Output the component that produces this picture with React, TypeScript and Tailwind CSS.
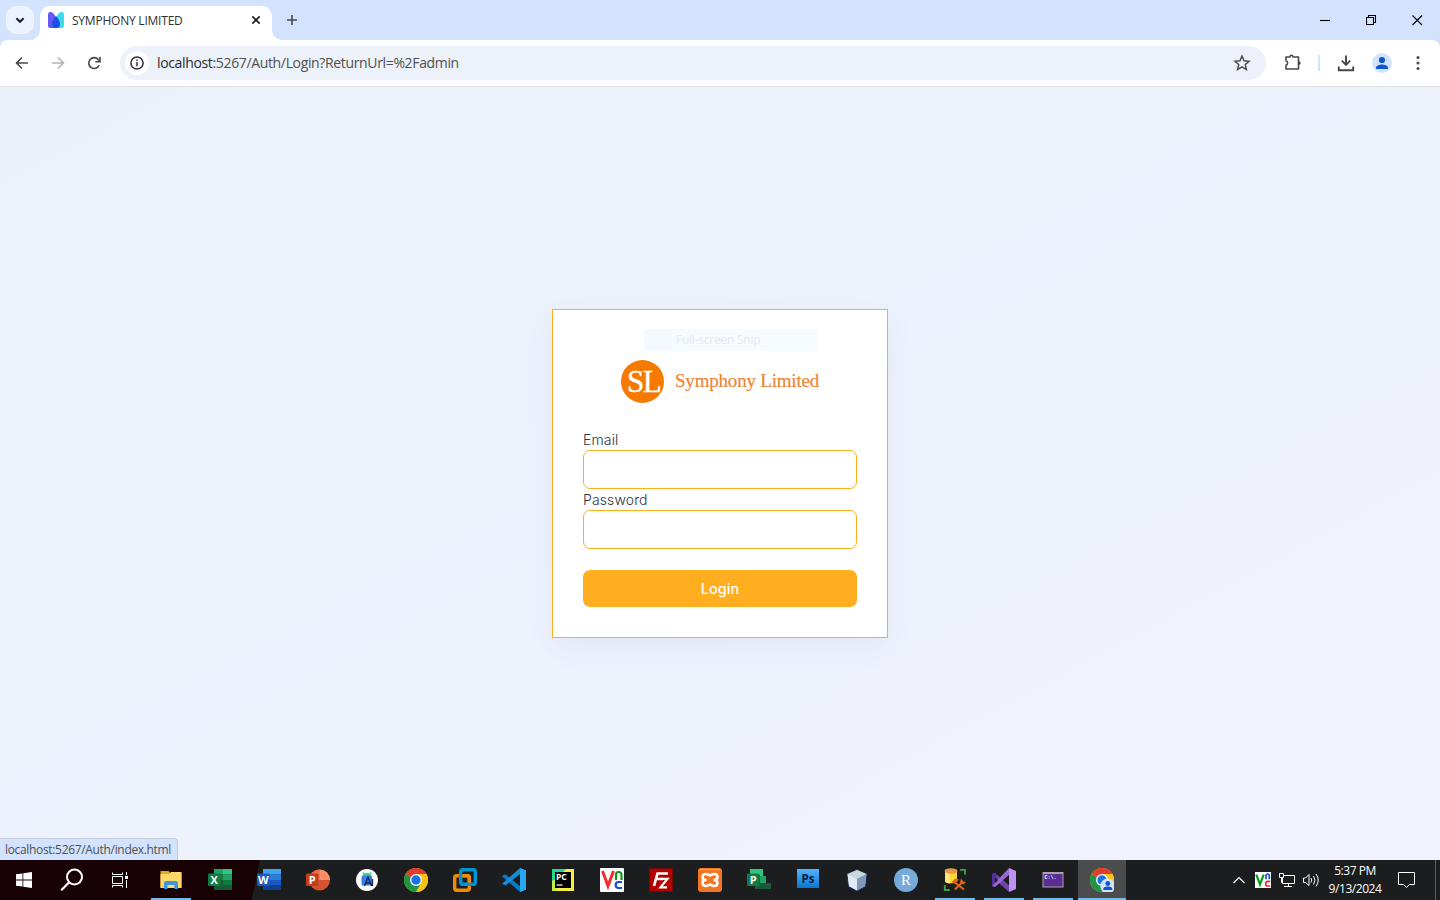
import React from "react";

const UI_FONT = "font-['Open_Sans','Noto_Sans',sans-serif]";

function Svg({ size = 24, box, className = "", children }: { size?: number; box?: string; className?: string; children: React.ReactNode }) {
  return (
    <svg width={size} height={size} viewBox={box ?? "0 0 24 24"} fill="none" className={`block shrink-0 ${className}`}>
      {children}
    </svg>
  );
}

function TabStrip() {
  return (
    <header className="flex h-10 items-start bg-[#d3e3fd]">
      <button className="ml-1.5 mt-1.5 flex h-7 w-7 shrink-0 items-center justify-center rounded-[10px] bg-[#edf3fe]">
        <Svg size={28} box="0 0 28 28"><path d="m10.400 12.200 3.600 3.600 3.600-3.600" stroke="#1f1f1f" strokeWidth="2" /></Svg>
      </button>
      <div className="flex h-10 w-[6px] items-end">
        <svg width="6" height="10" viewBox="0 0 6 10"><path d="M6 0v10H-4A10 10 0 0 0 6 0" fill="#fff" /></svg>
      </div>
      <div className="mt-1.5 flex h-[34px] w-[232px] items-center rounded-t-[10px] bg-white pb-1.5 pl-2">
        <Svg size={16} box="0 0 16 16">
          <path d="M0 3C0-.5 3-.7 5 1l3 4v11H2q-2 0-2-2z" fill="#6558f5" />
          <path d="M16 3c0-3.500-3-3.700-5-2L8 5v11h6q2 0 2-2z" fill="#3ddcec" />
          <path d="M8 4c2 2 4 5 4 8 0 2-1 4-2.500 4h-3C5 16 4 14 4 12c0-3 2-6 4-8" fill="#1b4fe8" />
        </Svg>
        <span className="ml-2 w-[176px] whitespace-nowrap pt-px text-[12px] leading-4 tracking-[-0.22px] text-[#303030]">SYMPHONY LIMITED</span>
        <Svg size={16} box="0 0 16 16"><path d="m4.300 4.300 7.400 7.400m0-7.400-7.400 7.400" stroke="#1f1f1f" strokeWidth="1.700" /></Svg>
      </div>
      <div className="flex h-10 w-[10px] items-end">
        <svg width="10" height="10" viewBox="0 0 10 10"><path d="M0 0v10h10A10 10 0 0 1 0 0" fill="#fff" /></svg>
      </div>
      <div className="flex h-10 w-5 items-center justify-center">
        <Svg size={12} box="0 0 12 12"><path d="M6 1v10M1 6h10" stroke="#474747" strokeWidth="1.600" /></Svg>
      </div>
      <div className="ml-auto flex h-10 items-center">
        {["M0 5.500h10", "M.500 2.500h7v7h-7zM2.500 2.500V.500h7v7H8", "m.500.500 9.500 9.500m0-9.500-9.500 9.500"].map((d) => (
          <div key={d} className="flex w-[46px] justify-center">
            <Svg size={11} box="0 0 11 11"><path d={d} stroke="#000" strokeWidth="1.100" /></Svg>
          </div>
        ))}
      </div>
    </header>
  );
}

function Toolbar() {
  return (
    <div className="bg-[#d3e3fd]">
      <div className="flex h-[47px] items-center rounded-t-[8px] border-b border-[#dfe1e5] bg-white pl-[14px]">
        <Svg size={16} box="0 0 16 16"><path d="M14 8H2.800M8 2.500 2.500 8 8 13.500" stroke="#474747" strokeWidth="1.600" /></Svg>
        <Svg size={16} box="0 0 16 16" className="ml-5"><path d="M2 8h11.200M8 2.500 13.500 8 8 13.500" stroke="#b4b4b4" strokeWidth="1.600" /></Svg>
        <Svg size={16} box="0 0 16 16" className="ml-5">
          <path d="M13.100 10.200A5.400 5.400 0 1 1 12.300 4.600L13.800 6" stroke="#474747" strokeWidth="1.600" />
          <path d="M14 2v4.700H9.300" stroke="#474747" strokeWidth="1.600" />
        </Svg>
        <div className="ml-[18px] flex h-[34px] w-[1146px] items-center rounded-full bg-[#ecf1fa] pl-[5px]">
          <div className="flex h-6 w-6 items-center justify-center rounded-full bg-white">
            <Svg size={16} box="0 0 16 16">
              <circle cx="8" cy="8" r="6.100" stroke="#303236" strokeWidth="1.500" />
              <path d="M8 7.100v4.100M8 4.600v1.500" stroke="#303236" strokeWidth="1.500" />
            </Svg>
          </div>
          <span className="ml-2 flex-1 whitespace-nowrap text-[14px] leading-5 tracking-[-0.350px] text-[#505050]">
            <span className="text-[#2a2a2a]">localhost</span>:5267/Auth/Login?ReturnUrl=%2Fadmin
          </span>
          <Svg size={18} box="0 0 24 24" className="mr-[15px]">
            <path d="m12 2.800 2.700 6.200 6.800.6-5.100 4.500 1.500 6.600L12 17.200l-5.900 3.500 1.500-6.600-5.100-4.500 6.800-.6z" stroke="#474747" strokeWidth="1.900" />
          </Svg>
        </div>
        <Svg size={20} box="0 0 20 20" className="ml-[17px]">
          <path d="M3 4h4V3.700a1.400 1.400 0 0 1 2.800 0V4h5.700v12H3v-3.800a2.300 2.300 0 0 0 0-4.400z" stroke="#474747" strokeWidth="1.600" strokeLinejoin="round" />
          <path d="M15.500 8.200c2.800-.4 2.800 4 0 3.600" fill="#474747" />
        </Svg>
        <div className="ml-[15px] h-4 w-0.5 bg-[#d3e3fd]" />
        <Svg size={18} box="0 0 18 18" className="ml-[17px]">
          <path d="M9 1.500v9M4.800 6.700 9 10.900l4.200-4.200M1.800 12.500v3.700h14.400v-3.700" stroke="#474747" strokeWidth="1.900" />
        </Svg>
        <div className="ml-[17px] flex h-5 w-5 items-center justify-center rounded-full bg-[#d3e3fd]">
          <Svg size={20} box="0 0 20 20"><circle cx="10" cy="7" r="3.100" fill="#0b57d0" /><path d="M4 16v-1.500c0-2 4-3 6-3s6 1 6 3V16z" fill="#0b57d0" /></Svg>
        </div>
        <Svg size={18} box="0 0 18 18" className="ml-[17px]">
          <g fill="#474747"><circle cx="9" cy="3.500" r="1.500" /><circle cx="9" cy="9" r="1.500" /><circle cx="9" cy="14.500" r="1.500" /></g>
        </Svg>
      </div>
    </div>
  );
}

function LoginCard() {
  return (
    <form className="relative flex h-[329px] w-[336px] flex-col border border-[#ffae1f] bg-white px-[30px] font-['Inter',sans-serif] text-[14px] text-[#2a3547] shadow-[0_10px_28px_rgba(60,60,100,0.06)]">
      <div className="mt-[49px] flex h-[44px] items-center pl-[38px] font-['Liberation_Serif',serif]">
        <div className="flex h-[43px] w-[43px] items-center justify-center rounded-full bg-[#f67a00] text-[31px] leading-none tracking-[-1.700px] text-white [-webkit-text-stroke:0.400px_#fff]">
          <span className="pl-0.5">SL</span>
        </div>
        <span className="ml-[11px] whitespace-nowrap text-[19px] leading-6 tracking-[-0.200px] text-[#ee8434] [-webkit-text-stroke:0.200px_#ee8434]">Symphony Limited</span>
      </div>
      <label className="mt-[26px] h-[21px] font-light leading-[21px] tracking-[0.130px]">Email</label>
      <input className="h-[39px] w-full rounded-[7px] border border-[#ffae1f] bg-white px-4" />
      <label className="h-[21px] font-light leading-[21px] tracking-[0.130px]">Password</label>
      <input type="password" className="h-[39px] w-full rounded-[7px] border border-[#ffae1f] bg-white px-4" />
      <button type="button" className="mt-[21px] h-[37px] w-full rounded-[7px] bg-[#ffae1f] text-[14.500px] font-medium text-white">Login</button>
      <div className={`absolute left-[91px] top-[19px] flex h-[22px] w-[173px] items-center bg-[#f6fbff] ${UI_FONT} text-[12px] leading-none text-[#e8eaed]`}>
        <span className="h-full w-7 bg-[#f4f9ff]" />
        <span className="whitespace-nowrap pl-1 tracking-[-0.240px]">Full-screen Snip</span>
      </div>
    </form>
  );
}

function OfficeTile({ letter, color }: { letter: string; color: string }) {
  return (
    <g>
      <rect x="0" y="5.500" width="12.500" height="12.500" rx="1" fill={color} />
      <text x="6.250" y="15.800" textAnchor="middle" fontSize="11" fontWeight="700" fontFamily="Open Sans, sans-serif" fill="#fff">{letter}</text>
    </g>
  );
}

function ChromeMark() {
  return (
    <g>
      <circle cx="12" cy="12" r="12" fill="#fbc116" />
      <path d="M12 12 1.600 6A12 12 0 0 1 22.400 6H12z" fill="#e33b2e" />
      <path d="M1.600 6A12 12 0 0 0 12 24l5.200-9L12 12z" fill="#229342" />
      <path d="M12 6h10.400A12 12 0 0 1 12 24l5.200-9z" fill="#fbc116" />
      <circle cx="12" cy="12" r="6" fill="#fff" />
      <circle cx="12" cy="12" r="4.700" fill="#1a73e8" />
    </g>
  );
}

const apps: { name: string; running?: boolean; active?: boolean; art: React.ReactNode }[] = [
  {
    name: "Files", running: true, art: (
      <g>
        <path d="M1.500 3h8l2 2h11v15h-21z" fill="#e8a317" />
        <path d="M1.500 6h9l1.500-2h10.500v16h-21z" fill="#ffd869" />
        <path d="M5 21v-6q0-2 2-2h10q2 0 2 2v6h-3.500v-4h-7v4z" fill="#3a96dd" />
      </g>
    ),
  },
  {
    name: "Excel", art: (
      <g>
        <rect x="6" y="1" width="18" height="21" rx="1" fill="#185c37" />
        <path d="M6 1h9v5.500H6z" fill="#21a366" /><path d="M15 1h9v5.500h-9z" fill="#33c481" />
        <path d="M15 6.500h9V12h-9z" fill="#21a366" /><path d="M6 6.500h9V12H6z" fill="#107c41" /><path d="M15 12h9v5h-9z" fill="#107c41" />
        <OfficeTile letter="X" color="#107c41" />
      </g>
    ),
  },
  {
    name: "Word", art: (
      <g>
        <rect x="6" y="1" width="18" height="21" rx="1" fill="#103f91" />
        <path d="M6 1h18v5.500H6z" fill="#41a5ee" /><path d="M6 6.500h18V12H6z" fill="#2b7cd3" /><path d="M6 12h18v5H6z" fill="#185abd" />
        <OfficeTile letter="W" color="#185abd" />
      </g>
    ),
  },
  {
    name: "PowerPoint", art: (
      <g>
        <circle cx="13.500" cy="12" r="10.500" fill="#d35230" />
        <path d="M13.500 12V1.500A10.500 10.500 0 0 0 3 12z" fill="#ed6c47" /><path d="M13.500 12V1.500A10.500 10.500 0 0 1 24 12z" fill="#ff8f6b" />
        <OfficeTile letter="P" color="#c43e1c" />
      </g>
    ),
  },
  {
    name: "Android Studio", art: (
      <g>
        <circle cx="12" cy="12" r="11" fill="#fff" />
        <path d="M7 8.500a5 3.500 0 0 1 10 0z" fill="#34c879" /><path d="m8 4 1 2m7-2-1 2" stroke="#34c879" />
        <rect x="6.500" y="8" width="10.500" height="9.500" rx="1" fill="#377df0" />
        <path d="m9.500 18 3.500-9 3.500 9m-5.800-3H15m2.500-4v7" stroke="#10223e" strokeWidth="1.300" />
      </g>
    ),
  },
  { name: "Chrome", art: <ChromeMark /> },
  {
    name: "VMware", art: (
      <g strokeWidth="3.400">
        <rect x="1.700" y="7.700" width="14.600" height="14.600" rx="2" stroke="#f38b00" />
        <rect x="7.700" y="1.700" width="14.600" height="14.600" rx="2" stroke="#0095d3" />
        <path d="M9.400 7.700h4.900q2 0 2 2v4.900" stroke="#f38b00" />
      </g>
    ),
  },
  {
    name: "VS Code", art: (
      <g>
        <path d="m18 0 6 2.500v19L18 24 0 8.200l2-1.700 2 .3L18 18z" fill="#0879c2" />
        <path d="M18 0v6L3.500 17.500 0 15.800z" fill="#168cd7" />
        <path d="m18 0 6 2.500v19L18 24z" fill="#2aa7f0" />
      </g>
    ),
  },
  {
    name: "PyCharm", art: (
      <g>
        <path d="M1 1h22v22H1z" fill="#f5ef48" /><path d="M1 23V1h14L8 8z" fill="#25d792" /><path d="M1 23V13l5-2v12z" fill="#c9eb52" />
        <path d="M4 4h16v16H4z" fill="#000" />
        <text x="5" y="12.300" fontSize="8.500" fontWeight="700" fontFamily="Open Sans, sans-serif" fill="#fff">PC</text>
        <path d="M5.500 17h6" stroke="#fff" strokeWidth="1.200" />
      </g>
    ),
  },
  {
    name: "VNC", art: (
      <g>
        <rect width="24" height="24" rx="1" fill="#fff" />
        <path d="m2.500 3 5.500 15L13.500 3" stroke="#f02c2c" strokeWidth="3" />
        <path d="M16 12V6.500q0-2.500 2.700-2.500T21.500 6.500V12" stroke="#0a9a18" strokeWidth="2.200" />
        <path d="M22 14h-3.500q-2.800 0-2.800 3t2.800 3H22" stroke="#164bd6" strokeWidth="2.200" />
      </g>
    ),
  },
  {
    name: "FileZilla", art: (
      <g>
        <path d="M.500.500h23v23H.500z" fill="#b50000" stroke="#860000" strokeDasharray="1 1" />
        <path d="M5 18 8.500 5.500H19M7.500 11H14" stroke="#fff" strokeWidth="2.700" />
        <path d="M12 10.800h6.500l-7 8.500H18" stroke="#fff" strokeWidth="2.200" />
      </g>
    ),
  },
  {
    name: "XAMPP", art: (
      <g>
        <rect width="24" height="24" rx="3" fill="#f47521" /><path d="M2 1.500h20" stroke="#ffad70" />
        <path d="M8.500 12C5 12 4.500 11 4.500 9S6 6 8 6s3 1.500 4 1.500S14 6 16 6s3.500 1 3.500 3-1 3-4 3c3 0 4 1 4 3s-1.500 3-3.500 3-3-1.500-4-1.500S10 18 8 18s-3.500-1-3.500-3 .5-3 4-3z" stroke="#fff" strokeWidth="2.600" />
      </g>
    ),
  },
  {
    name: "Project", art: (
      <g>
        <path d="M3 1h13v7H3z" fill="#33c481" /><path d="M6 8h13v7H6z" fill="#21a366" />
        <path d="M8 15h16v6H8z" fill="#185c37" /><path d="M3 7h10v10H3z" fill="#0b5731" />
        <OfficeTile letter="P" color="#107c41" />
      </g>
    ),
  },
  {
    name: "Photoshop", art: (
      <g>
        <defs><linearGradient id="ps" x1="0" y1="0" x2="0" y2="1"><stop stopColor="#54b4ff" /><stop offset="1" stopColor="#0875cf" /></linearGradient></defs>
        <rect x="1" y="1" width="22" height="19" fill="url(#ps)" />
        <text x="12" y="14.500" textAnchor="middle" fontSize="11.500" fontWeight="700" fontFamily="Open Sans, sans-serif" fill="#08213b">Ps</text>
      </g>
    ),
  },
  {
    name: "NetBeans", art: (
      <g>
        <path d="m12 1.500 10 4.500-1.500 12.500L12 23l-8.500-4.500L2 6z" fill="#a5b8d0" stroke="#20245e" />
        <path d="m12 2 9.500 4-9.500 5-9.500-5z" fill="#c5dcda" /><path d="M2.500 6 12 11v11.500l-8-4.200z" fill="#dfeaf6" /><path d="M21.500 6 12 11v11.500l8-4.200z" fill="#8398b8" />
      </g>
    ),
  },
  {
    name: "RStudio", art: (
      <g>
        <circle cx="12" cy="12" r="12" fill="#75aadb" />
        <text x="12" y="16.800" textAnchor="middle" fontSize="15" fontFamily="Liberation Serif, serif" fill="#fff">R</text>
      </g>
    ),
  },
  {
    name: "SQL Server", running: true, art: (
      <g>
        <path d="M2 3v10c0 3 12 3 12 0V3z" fill="#ffd437" /><path d="M2 3v10c0 2 4 2.500 5 2.500V3z" fill="#ffe779" /><ellipse cx="8" cy="3" rx="6.500" ry="2.700" fill="#e79a43" />
        <path d="M17 1.800h5v5M1.800 17v5h5" stroke="#41a044" strokeWidth="1.800" />
        <path d="m12 21.500 8-8m-9.500 0 10.500 8" stroke="#de6516" strokeWidth="2.200" /><path d="m8.500 14 4-3.500 3.500 1-4 4.500zM18 10.500l-1 4 4 2 2-3-2 .5-1.500-1.500z" fill="#de6516" />
      </g>
    ),
  },
  {
    name: "Visual Studio", running: true, art: (
      <g>
        <path d="m0 6 3-1 15 13-1 6L2 11z" fill="#6d45ad" />
        <path d="M0 6v12l3-3V9l2-1-2-3z" fill="#52309b" />
        <path d="m17 0 1 6L3 19l-3-1z" fill="#9c66d4" /><path d="m17 0 7 3v18l-7 3z" fill="#be91f3" />
        <path d="M3 9v6l3-3z" fill="#1b1d1e" />
      </g>
    ),
  },
  {
    name: "Console", running: true, art: (
      <g>
        <path d="M1.500 4h21v15.500h-21z" fill="#a6a6a9" /><path d="M2.500 6h19v12.500h-19z" fill="#5c2d91" />
        <text x="3.500" y="11" fontSize="5" fontWeight="700" fontFamily="Liberation Mono, monospace" fill="#fff">C:\.</text>
      </g>
    ),
  },
  {
    name: "Chrome profile", running: true, active: true, art: (
      <g>
        <ChromeMark /><circle cx="17.800" cy="18" r="7.500" fill="#d3e3fd" /><circle cx="17.800" cy="15.500" r="2.400" fill="#0b57d0" /><path d="M13.300 22v-1c0-2 3-2.500 4.500-2.500s4.500.5 4.500 2.500v1z" fill="#0b57d0" />
      </g>
    ),
  },
];

function Taskbar() {
  return (
    <footer className="flex h-10 bg-[linear-gradient(102deg,#190205_0,#190205_254px,#1b1d1e_255px,#1b1d1e_100%)] text-white">
      <div className="flex w-12 items-center justify-center">
        <Svg size={16} box="0 0 16 16"><path d="M0 2.300 6.500 1.400v6.200H0zm7.300-1L16 0v7.600H7.300zM0 8.400h6.500v6.200L0 13.700zm7.300 0H16V16l-8.700-1.300z" fill="#fff" /></Svg>
      </div>
      <div className="flex w-12 items-center justify-center">
        <Svg size={24}><circle cx="14.500" cy="9" r="7.500" stroke="#fff" strokeWidth="2" /><path d="m9.200 14.300-8 8" stroke="#fff" strokeWidth="2.200" /></Svg>
      </div>
      <div className="mr-[3px] flex w-12 items-center justify-center">
        <Svg size={16} box="0 0 16 16"><path d="M.500.500v2h10v-2M.500 4.500h10v7H.500zM.500 15.500v-2h10v2M14.500 0v3m0 5v8" stroke="#fff" /><path d="M13 4h3v3h-3z" fill="#fff" /></Svg>
      </div>
      <div className="flex gap-px">
        {apps.map((app) => (
          <div key={app.name} className={`flex h-10 w-12 flex-col items-center ${app.active ? "bg-[#4a4c4d]" : ""}`}>
            <Svg className="mb-[6px] mt-2">{app.art}</Svg>
            {app.running && <div className={app.active ? "h-0.5 w-12 bg-[#76b9ed]" : "h-0.5 w-10 bg-[#76b9ed]"} />}
          </div>
        ))}
      </div>
      <div className="ml-auto flex h-10 items-center">
        <Svg size={12} box="0 0 12 12" className="mr-[10px]"><path d="m.500 9 5.500-5.500L11.500 9" stroke="#fff" strokeWidth="1.200" /></Svg>
        <Svg size={16} box="0 0 24 24" className="mr-2">
          <path d="M0 0h24v24H0z" fill="#fff" /><path d="m2 4 5.500 14.500L13 4" stroke="#079c18" strokeWidth="3.300" />
          <path d="M16.500 11V5.500q0-2.500 2.500-2.500t2.500 2.500V11" stroke="#164bd6" strokeWidth="2.500" /><path d="M23 14h-4q-3 0-3 3.500t3 3.500h4" stroke="#f02c2c" strokeWidth="2.500" />
        </Svg>
        <Svg size={16} box="0 0 16 16" className="mr-2"><path d="M5 3.500h10.500v8H3.500V6M9.500 12v2.500M5 14.500h8M.500 1.500h4v4h-4zM2.500 5.500v5h1" stroke="#fff" /></Svg>
        <Svg size={16} box="0 0 16 16" className="mr-[9px]"><path d="M.500 6v4.500h2l3.500 3v-11l-3.500 3.500zM8 6q1.500 2 0 4.500M10.500 4q3 4 0 8.500M13 2q4.500 6 0 12.500" stroke="#fff" /></Svg>
        <div className="flex w-[54px] flex-col items-center whitespace-nowrap text-[12px] leading-[18px] tracking-[-0.450px]">
          <span>5:37 PM</span><span>9/13/2024</span>
        </div>
        <Svg size={17} box="0 0 17 17" className="ml-4 mr-5"><path d="M.500.500h16v12h-5l-3 3-3-3h-5z" stroke="#fff" /></Svg>
        <div className="mr-1 h-10 w-px bg-[#5d6061]" />
      </div>
    </footer>
  );
}

export default function App() {
  return (
    <div className={`flex h-[900px] w-[1440px] flex-col overflow-hidden ${UI_FONT}`}>
      <TabStrip />
      <Toolbar />
      <main className="relative flex h-[773px] justify-center bg-[linear-gradient(to_bottom_right,#e9f2fb_0%,#edf2fd_50%,#f2f2fe_100%)] pt-[222px]">
        <LoginCard />
        <div className="absolute bottom-0 left-0 flex h-[22px] w-[178px] items-center rounded-tr-[4px] border-r border-t border-[#c5cddd] bg-[#d3e3fd] pl-[5px] text-[12px] leading-none text-[#505050]">
          <span className="whitespace-nowrap tracking-[-0.330px]">localhost:5267/Auth/index.html</span>
        </div>
      </main>
      <Taskbar />
    </div>
  );
}
